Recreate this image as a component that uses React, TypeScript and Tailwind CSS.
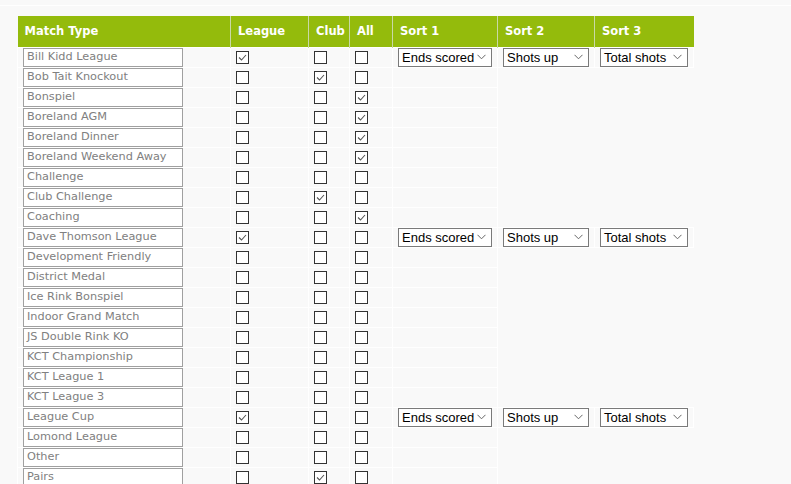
const rows: { name: string; league?: boolean; club?: boolean; all?: boolean }[] = [
  { name: 'Bill Kidd League', league: true },
  { name: 'Bob Tait Knockout', club: true },
  { name: 'Bonspiel', all: true },
  { name: 'Boreland AGM', all: true },
  { name: 'Boreland Dinner', all: true },
  { name: 'Boreland Weekend Away', all: true },
  { name: 'Challenge' },
  { name: 'Club Challenge', club: true },
  { name: 'Coaching', all: true },
  { name: 'Dave Thomson League', league: true },
  { name: 'Development Friendly' },
  { name: 'District Medal' },
  { name: 'Ice Rink Bonspiel' },
  { name: 'Indoor Grand Match' },
  { name: 'JS Double Rink KO' },
  { name: 'KCT Championship' },
  { name: 'KCT League 1' },
  { name: 'KCT League 3' },
  { name: 'League Cup', league: true },
  { name: 'Lomond League' },
  { name: 'Other' },
  { name: 'Pairs', club: true },
]

function Check({ on }: { on?: boolean }) {
  return (
    <span className="block w-[13px] h-[13px] mt-[1px] border border-[#333] bg-white">
      {on && (
        <svg viewBox="0 0 11 11" className="w-[11px] h-[11px]">
          <path d="M2 5.5 L4.5 8 L9 3" fill="none" stroke="#555" strokeWidth="1.1" />
        </svg>
      )}
    </span>
  )
}

function Select({ value, w }: { value: string; w: string }) {
  return (
    <div
      className={`${w} h-[19px] border border-[#7a7a7a] bg-white flex items-center justify-between pl-[3px] pr-[5px] text-[13px] text-black`}
      style={{ fontFamily: '"Liberation Sans", Arial, sans-serif' }}
    >
      <span className="leading-none">{value}</span>
      <svg viewBox="0 0 9 6" className="w-[9px] h-[6px]">
        <path d="M0.5 0.8 L4.5 4.8 L8.5 0.8" fill="none" stroke="#666" strokeWidth="1" />
      </svg>
    </div>
  )
}

const th = 'text-left font-bold text-white text-[11.5px] px-[7px] border-x border-[#c9d9a6] first:border-l-0 last:border-r-0'

export default function App() {
  return (
    <div
      className="min-h-screen bg-[#f9f9f9] pt-[5px] text-[11.3px]"
      style={{ fontFamily: '"DejaVu Sans", Verdana, sans-serif' }}
    >
      <div className="border-t border-white pt-[10px] pl-[17px]">
        <table className="border-collapse table-fixed w-[676px]">
          <colgroup>
            <col className="w-[213px]" />
            <col className="w-[78px]" />
            <col className="w-[41px]" />
            <col className="w-[43px]" />
            <col className="w-[105px]" />
            <col className="w-[97px]" />
            <col className="w-[99px]" />
          </colgroup>
          <thead>
            <tr className="bg-[#94bb0c] h-[31px]">
              <th className={th}>Match Type</th>
              <th className={th}>League</th>
              <th className={th}>Club</th>
              <th className={th}>All</th>
              <th className={th}>Sort 1</th>
              <th className={th}>Sort 2</th>
              <th className={th}>Sort 3</th>
            </tr>
          </thead>
          <tbody>
            {rows.map((r) => (
              <tr key={r.name} className="h-[20px]">
                <td className="border border-white pl-[5px] py-0">
                  <div className="w-[160px] h-[19px] border border-[#a0a0a0] bg-white text-[#808080] pl-[3px] flex items-center">
                    {r.name}
                  </div>
                </td>
                <td className="border border-white pl-[5px]">
                  <Check on={r.league} />
                </td>
                <td className="border border-white pl-[5px]">
                  <Check on={r.club} />
                </td>
                <td className="border border-white pl-[5px]">
                  <Check on={r.all} />
                </td>
                {r.league ? (
                  <>
                    <td className="border border-white pl-[5px]">
                      <Select value="Ends scored" w="w-[94px]" />
                    </td>
                    <td className="border border-white pl-[5px]">
                      <Select value="Shots up" w="w-[86px]" />
                    </td>
                    <td className="border border-white pl-[5px]">
                      <Select value="Total shots" w="w-[88px]" />
                    </td>
                  </>
                ) : (
                  <>
                    <td className="border border-white" />
                    <td />
                    <td />
                  </>
                )}
              </tr>
            ))}
          </tbody>
        </table>
      </div>
    </div>
  )
}
